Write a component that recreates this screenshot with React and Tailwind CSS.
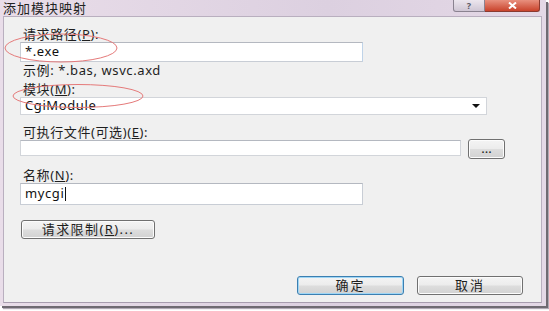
import React from "react";

const font = { fontFamily: '"Noto Sans", "Noto Sans CJK SC", sans-serif' };

function Label({ children, className = "" }) {
  return (
    <div className={`h-[14px] text-[13px] leading-[14px] tracking-[0.6px] text-[#1e1e1e] pl-[3px] ${className}`}>
      {children}
    </div>
  );
}

function TextBox({ value, className = "" }) {
  return (
    <div
      className={`flex items-center bg-white border border-[#c8cdd5] border-t-[#b4b8c0] px-[4px] text-[13px] tracking-[0.6px] text-[#111] ${className}`}
    >
      {value}
    </div>
  );
}

function WinButton({ children, className = "", primary = false }) {
  return (
    <button
      className={`flex items-center justify-center rounded-[3px] border text-[13px] text-[#1e1e1e] bg-[linear-gradient(#f4f4f4_0%,#ececec_48%,#dddddd_52%,#d2d2d2_100%)] ${
        primary
          ? "border-[#3c7fb1] shadow-[inset_0_0_0_1px_#9fd6f5]"
          : "border-[#707070] shadow-[inset_0_0_0_1px_#fcfcfc]"
      } ${className}`}
    >
      {children}
    </button>
  );
}

export default function App() {
  return (
    <div className="w-[549px] h-[311px] bg-white overflow-hidden" style={font}>
      <div className="relative w-[546px] h-[306px] flex flex-col bg-[linear-gradient(90deg,#e9dde9,#dcd0e0_60%,#e4d8e6)] shadow-[2px_2px_0_#6f6a72,3px_3px_1px_#b0a8b4]">
        {/* Title bar */}
        <div className="h-[16px] flex items-start">
          <div className="pl-[3px] pt-[1px] text-[13px] leading-[14px] tracking-[1px] text-[#222]">添加模块映射</div>
          <div className="ml-auto mr-[6px] flex">
            <div className="w-[32px] h-[12px] rounded-bl-[3px] border border-t-0 border-[#8a8290] bg-[linear-gradient(#ece6ee,#cfc6d4)] flex items-center justify-center">
              <span className="text-[9px] leading-[10px] font-bold text-[#5a5a66]">?</span>
            </div>
            <div className="w-[55px] h-[12px] rounded-br-[3px] border border-t-0 border-l-0 border-[#8a3a30] bg-[linear-gradient(#e8907e,#c9432c)] flex items-center justify-center">
              <svg width="9" height="7" viewBox="0 0 9 7">
                <path d="M1 0.5 L8 6.5 M8 0.5 L1 6.5" stroke="#fff" strokeWidth="2" />
              </svg>
            </div>
          </div>
        </div>

        {/* Body */}
        <div className="relative ml-[3px] mr-[4px] mb-[3px] flex-1 bg-[#f0f0f0] border border-[#b9afbf] border-b-[#a79cae] pl-[16px]">
          <div className="flex flex-col pt-[10px]">
            <Label>请求路径(<span className="underline">P</span>):</Label>
            <TextBox value="*.exe" className="mt-[1px] w-[343px] h-[20px] border-r-[#bfd3e8]" />
            <Label className="mt-[1px]">示例: *.bas, wsvc.axd</Label>

            <Label className="mt-[5px]">模块(<span className="underline">M</span>):</Label>
            <div className="mt-[1px] w-[467px] h-[18px] flex items-center bg-white border border-[#d2d5da] pl-[4px] pr-[6px] text-[13px] tracking-[0.6px] text-[#111]">
              <span>CgiModule</span>
              <span className="ml-auto w-0 h-0 border-l-[4px] border-r-[4px] border-t-[4px] border-l-transparent border-r-transparent border-t-[#111]" />
            </div>

            <Label className="mt-[10px]">可执行文件(可选)(<span className="underline">E</span>):</Label>
            <div className="flex items-start gap-[7px]">
              <TextBox value="" className="mt-[1px] w-[441px] h-[16px] border-[#d2d5da]" />
              <WinButton className="w-[37px] h-[20px] text-[9px] leading-[9px] pb-[2px]">...</WinButton>
            </div>

            <Label className="mt-[9px]">名称(<span className="underline">N</span>):</Label>
            <TextBox
              value={
                <span className="flex items-center">
                  mycgi<span className="inline-block w-[1px] h-[14px] bg-[#111] ml-[1px]" />
                </span>
              }
              className="mt-[1px] w-[343px] h-[22px] border-[#b9c8dc]"
            />

            <WinButton className="mt-[15px] ml-[1px] w-[134px] h-[19px] tracking-[1.4px]">
              请求限制(<span className="underline">R</span>)...
            </WinButton>

            <div className="mt-[37px] flex pl-[277px] gap-[13px]">
              <WinButton primary className="w-[107px] h-[19px] tracking-[2px]">确定</WinButton>
              <WinButton className="w-[106px] h-[19px] tracking-[2px]">取消</WinButton>
            </div>
          </div>
        </div>

        {/* Red annotation ellipses */}
        <svg className="absolute left-0 top-0 pointer-events-none" width="546" height="306">
          <ellipse cx="61" cy="48" rx="56" ry="14" fill="none" stroke="#e57a7a" strokeWidth="1" />
          <ellipse cx="78" cy="96" rx="65" ry="11.5" fill="none" stroke="#e57a7a" strokeWidth="1" />
        </svg>
      </div>
    </div>
  );
}
